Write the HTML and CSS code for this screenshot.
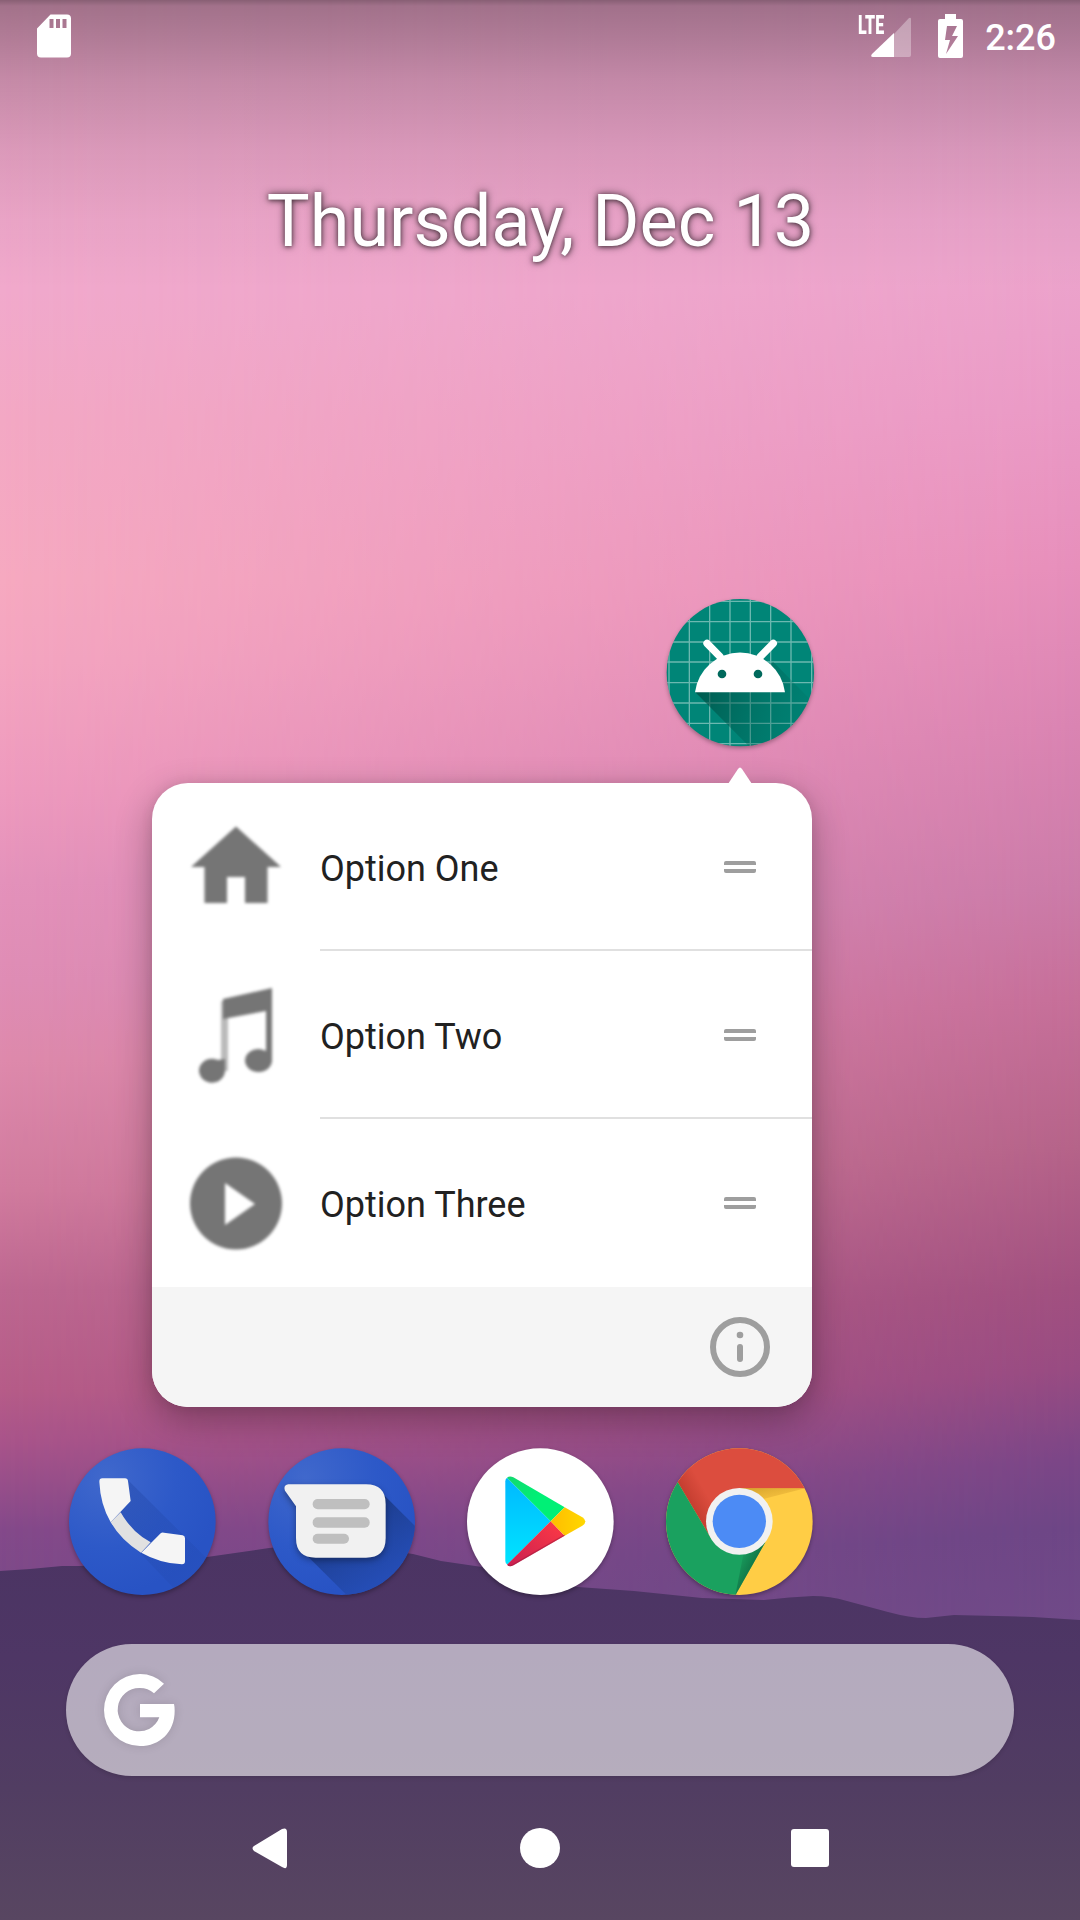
FILE: index.html
```html
<!DOCTYPE html>
<html lang="en">
<head>
<meta charset="utf-8">
<title>Home</title>
<link rel="stylesheet" href="styles.css">
</head>
<body>
<main class="screen">
  <div class="wallpaper" aria-hidden="true">
    <div class="sky sky-right"></div>
    <svg class="hills" width="1080" height="400" viewBox="0 1520 1080 400">
      <defs>
        <linearGradient id="hill" x1="0" y1="0" x2="0" y2="1">
          <stop offset="0" stop-color="#4b3463"/>
          <stop offset=".3" stop-color="#4e3665"/>
          <stop offset=".65" stop-color="#513d62"/>
          <stop offset="1" stop-color="#584661"/>
        </linearGradient>
      </defs>
      <path fill="url(#hill)" d="M0 1571 L30 1569 L62 1566 L79 1566 L140 1563 L207 1557 L269 1548 L300 1545 L350 1545 L413 1554 L441 1561 L482 1567 L530 1578 L578 1587 L634 1591 L702 1598 L764 1600 Q790 1597 813 1596 Q830 1596 847 1601 L888 1612 Q910 1618 926 1618 L954 1615 L1033 1617 L1080 1620 V1920 H0z"/>
    </svg>
    <div class="scrim"></div>
  </div>

  <header class="status">
    <svg width="36" height="46" viewBox="0 0 36 46">
      <path fill="#fff" fill-rule="evenodd" d="M14.500 1.500H31a4 4 0 0 1 4 4V40.500a4 4 0 0 1-4 4H5a4 4 0 0 1-4-4V15.500zM13.500 6v9h4V6zm6.500 0v9h4V6zm6.500 0v9h4V6z"/>
    </svg>
    <div class="status-right">
      <div class="signal">
        <span class="lte">LTE</span>
        <svg width="40" height="40" viewBox="0 0 40 40">
          <path fill="#fff" fill-opacity=".33" d="M23 17 38 1q2-1 2 1V38q0 2-2 2H23z"/>
          <path fill="#fff" d="M23 16V40H2q-3 0-1-3z"/>
        </svg>
      </div>
      <svg width="25" height="44" viewBox="0 0 25 44">
        <path fill="#fff" fill-rule="evenodd" d="M7 0H18V5H23q2 0 2 2V42q0 2-2 2H2q-2 0-2-2V7q0-2 2-2H7zM9 12 7 26h5L8 40 20 22h-6L19 12z"/>
      </svg>
      <span class="time">2:26</span>
    </div>
  </header>

  <h1 class="date">Thursday, Dec 13</h1>

  <section class="workspace">
    <svg class="app" width="160" height="160" viewBox="60 35 480 480">
      <defs>
        <clipPath id="appClip"><circle cx="301" cy="277" r="221"/></clipPath>
        <linearGradient id="appShade" x1="180" y1="330" x2="480" y2="450" gradientUnits="userSpaceOnUse">
          <stop offset="0" stop-color="#00473d" stop-opacity=".65"/>
          <stop offset="1" stop-color="#00695c" stop-opacity=".15"/>
        </linearGradient>
      </defs>
      <g clip-path="url(#appClip)">
        <rect x="61" y="37" width="480" height="480" fill="#008577"/>
        <path stroke="#fff" stroke-opacity=".42" stroke-width="4" fill="none" d="M87 37V517M148 37V517M209 37V517M270 37V517M331 37V517M392 37V517M453 37V517M515 37V517M61 63H541M61 124H541M61 185H541M61 245H541M61 307H541M61 368H541M61 429H541M61 490H541"/>
        <path fill="url(#appShade)" d="M166 336 346 517H541V388L400 245z"/>
      </g>
      <path d="M201 189 240 229M400 189 361 229" stroke="#fff" stroke-width="22" stroke-linecap="round"/>
      <path fill="#fff" d="M165 336A136 136 0 0 1 435 336z"/>
      <circle cx="246" cy="281" r="13" fill="#00695c"/>
      <circle cx="354" cy="281" r="13" fill="#00695c"/>
    </svg>

    <div class="popup">
      <svg class="arrow" width="24" height="17" viewBox="0 0 24 17"><path fill="#fff" d="M0 17 10 2q2-3 4 0L24 17z"/></svg>
      <ul class="options">
        <li class="option">
          <svg class="glyph" width="108" height="108" viewBox="0 0 24 24"><path d="M10 20v-5.800h4v5.800h5v-8h3L12 3 2 12h3v8z"/></svg>
          <div class="row"><span>Option One</span><i class="handle"></i></div>
        </li>
        <li class="option">
          <svg class="glyph" width="108" height="108" viewBox="0 0 108 108">
            <path opacity=".5" d="M39 20h7V90h-7z"/>
            <path d="M41 18 90 7V80A13.500 11.500 0 1 1 84 70V30L41 38zM43 78V90A13 12 0 1 1 36 79z"/>
          </svg>
          <div class="row"><span>Option Two</span><i class="handle"></i></div>
        </li>
        <li class="option">
          <svg class="glyph" width="108" height="108" viewBox="0 0 108 108"><path fill-rule="evenodd" d="M54 8.500a46 46 0 1 0 0 92 46 46 0 0 0 0-92zM43 34 73 55 43 76z"/></svg>
          <div class="row"><span>Option Three</span><i class="handle"></i></div>
        </li>
      </ul>
      <div class="popup-foot">
        <svg width="60" height="60" viewBox="0 0 60 60">
          <circle cx="30" cy="30" r="27" fill="none" stroke="#9e9e9e" stroke-width="6"/>
          <circle cx="30" cy="18" r="3.300" fill="#9e9e9e"/>
          <rect x="27" y="27" width="6" height="18" rx="3" fill="#9e9e9e"/>
        </svg>
      </div>
    </div>
  </section>

  <nav class="dock">
    <svg class="app" width="160" height="160" viewBox="36 32 480 480">
      <defs>
        <radialGradient id="blue" cx=".25" cy=".2" r=".8">
          <stop offset="0" stop-color="#4068cc"/><stop offset=".6" stop-color="#2d59c8"/><stop offset="1" stop-color="#2853c4"/>
        </radialGradient>
        <linearGradient id="phoneShade" x1="200" y1="200" x2="420" y2="430" gradientUnits="userSpaceOnUse">
          <stop offset="0" stop-color="#1f429f" stop-opacity=".35"/><stop offset="1" stop-color="#1f429f" stop-opacity=".15"/>
        </linearGradient>
        <clipPath id="phoneClip"><circle cx="277" cy="274" r="220"/></clipPath>
      </defs>
      <circle cx="277" cy="274" r="220" fill="url(#blue)"/>
      <path clip-path="url(#phoneClip)" fill="url(#phoneShade)" d="M233 148 403 317 517 430V514H410L182 276 212 246z"/>
      <path fill="#e1e1e1" d="M182 276 212 246Q245 305 302 336L273 367Q215 332 182 276z"/>
      <path fill="#f5f5f5" d="M182 276Q151 222 148 154 148 144 157 144H225Q233 144 234 152L242 212zM274 367 332 309Q336 305 342 307L398 315Q405 317 405 324V393Q405 402 396 402 330 399 274 367z"/>
    </svg>
    <svg class="app" width="160" height="160" viewBox="633 32 480 480">
      <defs>
        <linearGradient id="msgShade" x1="850" y1="300" x2="960" y2="470" gradientUnits="userSpaceOnUse">
          <stop offset="0" stop-color="#1b3a87" stop-opacity=".9"/><stop offset="1" stop-color="#234aae" stop-opacity=".7"/>
        </linearGradient>
        <clipPath id="msgClip"><circle cx="875" cy="274" r="220"/></clipPath>
      </defs>
      <circle cx="875" cy="274" r="220" fill="url(#blue)"/>
      <path clip-path="url(#msgClip)" fill="url(#msgShade)" d="M760 365 910 514H1114V306L995 187z"/>
      <path class="bubble" fill="#f1f1f1" d="M715 162H948Q1007 162 1007 221V323Q1007 382 948 382H797Q738 382 738 323V228L705 181Q699 164 715 162z"/>
      <g fill="#bfbfbf"><rect x="788" y="206" width="171" height="31" rx="15"/><rect x="788" y="261" width="171" height="31" rx="15"/><rect x="788" y="310" width="109" height="30" rx="15"/></g>
    </svg>
    <svg class="app" width="160" height="160" viewBox="30 32 480 480">
      <defs>
        <linearGradient id="playBlue" x1="0" y1="0" x2="0" y2="1"><stop offset="0" stop-color="#00b8ff"/><stop offset="1" stop-color="#00e5ff"/></linearGradient>
        <linearGradient id="playGreen" x1="0" y1="0" x2="1" y2=".6"><stop offset="0" stop-color="#13d86e"/><stop offset=".6" stop-color="#00f076"/></linearGradient>
        <linearGradient id="playRed" x1="1" y1="0" x2="0" y2="1"><stop offset="0" stop-color="#ff3a44"/><stop offset="1" stop-color="#c81f52"/></linearGradient>
        <linearGradient id="playYellow" x1="0" y1="0" x2="1" y2="0"><stop offset="0" stop-color="#ffbc00"/><stop offset="1" stop-color="#ffd800"/></linearGradient>
      </defs>
      <circle cx="271" cy="274" r="220" fill="#fff"/>
      <path fill="url(#playBlue)" d="M171 142 302 273 172 403Q166 400 166 392V153Q166 146 171 142z"/>
      <path fill="url(#playGreen)" d="M171 142Q179 135 190 141L344 231 302 273z"/>
      <path fill="url(#playRed)" d="M302 273 344 316 190 405Q178 411 171 403z"/>
      <path fill="url(#playYellow)" d="M344 231 397 261Q415 273 397 286L344 316 302 273z"/>
      <path fill="none" stroke="#a01c40" stroke-opacity=".55" stroke-width="4" d="M174 404Q180 408 190 403L344 314"/>
    </svg>
    <svg class="app" width="160" height="160" viewBox="627 32 480 480">
      <defs>
        <clipPath id="chromeClip"><circle cx="868" cy="274" r="220"/></clipPath>
        <linearGradient id="redShade" x1="700" y1="230" x2="770" y2="190" gradientUnits="userSpaceOnUse"><stop offset="0" stop-color="#a52a1e" stop-opacity=".6"/><stop offset="1" stop-color="#a52a1e" stop-opacity="0"/></linearGradient>
        <linearGradient id="yellowShade" x1="880" y1="174" x2="890" y2="220" gradientUnits="userSpaceOnUse"><stop offset="0" stop-color="#b5841b" stop-opacity=".6"/><stop offset="1" stop-color="#d89f2c" stop-opacity=".35"/></linearGradient>
        <linearGradient id="greenShade" x1="910" y1="430" x2="860" y2="405" gradientUnits="userSpaceOnUse"><stop offset="0" stop-color="#0b5a38" stop-opacity=".7"/><stop offset="1" stop-color="#0b5a38" stop-opacity=".1"/></linearGradient>
      </defs>
      <g clip-path="url(#chromeClip)">
        <rect x="628" y="34" width="480" height="480" fill="#ffcd45"/>
        <path fill="#dc4d3e" d="M628 34H1108V174H868L782 322 683 155 628 100z"/>
        <path fill="url(#redShade)" d="M683 155 782 322 800 180 760 60z"/>
        <path fill="#1aa15f" d="M683 155 782 322 868 372 946 336 856 495V514H628V100z"/>
        <path fill="url(#greenShade)" d="M946 336 856 495 880 372z"/>
        <path fill="url(#yellowShade)" d="M868 174H1066L940 206z"/>
      </g>
      <circle cx="868" cy="273" r="100" fill="#f1f1f1"/>
      <circle cx="868" cy="273" r="80" fill="#4c8bf5"/>
    </svg>
  </nav>

  <div class="search">
    <svg class="g-logo" width="72" height="74" viewBox="159 129 216 222">
      <path fill="#fff" d="M342 161 312 190Q294 174 270 174A64.500 65 0 1 0 328 262H270V222H372Q374 230 374 242C374 306 330 348 270 348A108 108 0 0 1 270 132Q312 132 342 161z"/>
    </svg>
  </div>

  <footer class="navbar">
    <svg width="40" height="44" viewBox="0 0 40 44"><path fill="#fff" d="M4 20 32 3q5-2 5 3V39q0 5-5 2L4 25q-3-3 0-5z"/></svg>
    <svg width="40" height="40" viewBox="0 0 40 40"><circle cx="20" cy="20" r="20" fill="#fff"/></svg>
    <svg width="40" height="40" viewBox="0 0 40 40"><rect x="1" y="1" width="38" height="38" rx="3" fill="#fff"/></svg>
  </footer>
</main>
</body>
</html>
```
FILE: styles.css
```css
* { box-sizing: border-box; }

body {
  margin: 0;
  font-family: Roboto, sans-serif;
}

svg { display: block; flex: none; }

.screen {
  position: relative;
  width: 1080px;
  height: 1920px;
  overflow: hidden;
  display: flex;
  flex-direction: column;
  isolation: isolate;
}

.wallpaper {
  position: absolute;
  inset: 0;
  z-index: -1;
  background:
    linear-gradient(180deg,
      #f0a8cc 0, #f1a9cc 290px, #f3a8c4 420px, #f6a9c0 580px, #f4a5c0 660px,
      #ee9abe 790px, #e492bb 880px, #df8db5 980px, #de8aac 1060px,
      #d17b9e 1190px, #bd6790 1290px, #b65c88 1390px, #a9548a 1440px,
      #84498a 1530px, #7a4a88 1600px);
}

.sky { position: absolute; inset: 0; }

.sky-right {
  background: linear-gradient(176deg,
    #eba5cc 0, #eca4cc 330px, #ea9ac6 480px, #e78fbb 640px, #da84b2 800px,
    #cb7ba8 960px, #c66f99 1070px, #b56389 1220px, #a15080 1360px,
    #984b82 1440px, #7b4687 1530px, #6d4686 1600px, #704a88 1700px);
  -webkit-mask-image: linear-gradient(90deg, transparent 0, #000 100%);
  mask-image: linear-gradient(90deg, transparent 0, #000 100%);
}

.hills { position: absolute; left: 0; bottom: 0; }

.scrim {
  position: absolute;
  inset: 0 0 auto;
  height: 290px;
  background: linear-gradient(180deg,
    rgba(0, 0, 0, .43) 0, rgba(0, 0, 0, .32) 6px, rgba(0, 0, 0, .26) 40px,
    rgba(0, 0, 0, .18) 80px, rgba(0, 0, 0, .09) 150px, rgba(0, 0, 0, .03) 220px, transparent 290px);
}

.status {
  height: 72px;
  flex: none;
  padding: 13px 24px 0 36px;
  display: flex;
  justify-content: space-between;
}

.status-right {
  display: flex;
  align-items: flex-start;
  color: #fff;
  padding-top: 1px;
}

.status-right > svg { margin: 0 22px 0 27px; }

.signal {
  position: relative;
  padding-top: 3px;
}

.lte {
  position: absolute;
  left: -13px;
  top: -1px;
  font: 900 25px/25px Roboto, sans-serif;
  transform: scaleX(.64);
  transform-origin: 0 0;
}

.time {
  font-size: 36px;
  font-weight: 500;
  line-height: 42px;
  margin-top: 3px;
}

.date {
  flex: none;
  margin: 108px 0 0;
  height: 84px;
  padding-left: 1px;
  font-size: 72px;
  font-weight: 400;
  line-height: 84px;
  text-align: center;
  color: #fff;
  text-shadow: 0 0 8px rgba(0, 0, 0, .6), 0 1px 4px rgba(0, 0, 0, .5);
}

.workspace {
  position: relative;
  flex: 1;
  padding: 328px 0 0 660px;
}

.app { filter: drop-shadow(0 2px 2px rgba(0, 0, 0, .3)); }

.bubble { filter: drop-shadow(0 8px 10px rgba(0, 0, 0, .35)); }

.popup {
  position: absolute;
  left: 152px;
  top: 519px;
  width: 660px;
  border-radius: 36px;
  background: #fff;
  box-shadow: 0 12px 36px rgba(0, 0, 0, .3), 0 0 12px rgba(0, 0, 0, .08);
}

.arrow {
  position: absolute;
  left: 576px;
  top: -16px;
}

.options {
  list-style: none;
  margin: 0;
  padding: 0;
}

.option {
  display: flex;
  align-items: center;
  gap: 30px;
  height: 168px;
  padding-left: 30px;
}

.glyph {
  fill: #757575;
  filter: blur(1.7px);
}

.row {
  flex: 1;
  align-self: stretch;
  display: flex;
  align-items: center;
  justify-content: space-between;
  padding-right: 56px;
  border-bottom: 2px solid #e0e0e0;
  margin-left: 1px;
  margin-left: 0;
  font-size: 36px;
  color: #212121;
}

.row span { padding-top: 5px; }

.option:last-child .row { border-bottom-color: transparent; }

.handle {
  width: 32px;
  height: 12px;
  margin-top: 2px;
  background:
    linear-gradient(#9e9e9e, #9e9e9e) 0 0 / 32px 4px no-repeat,
    linear-gradient(#9e9e9e, #9e9e9e) 0 8px / 32px 4px no-repeat;
  border-radius: 2px;
}

.popup-foot {
  height: 120px;
  padding-right: 42px;
  display: flex;
  align-items: center;
  justify-content: flex-end;
  background: #f5f5f5;
  border-radius: 0 0 36px 36px;
}

.dock {
  flex: none;
  height: 203px;
  padding-left: 62px;
  display: flex;
  gap: 39px;
}

.search {
  flex: none;
  height: 132px;
  margin: 0 66px;
  padding-left: 37px;
  display: flex;
  align-items: center;
  border-radius: 66px;
  background: rgba(255, 255, 255, .58);
  box-shadow: 0 2px 4px rgba(0, 0, 0, .12);
}

.g-logo { filter: drop-shadow(0 0 5px rgba(0, 0, 0, .12)); }

.navbar {
  flex: none;
  height: 144px;
  padding: 0 250px;
  display: flex;
  align-items: center;
  justify-content: space-between;
}
```
